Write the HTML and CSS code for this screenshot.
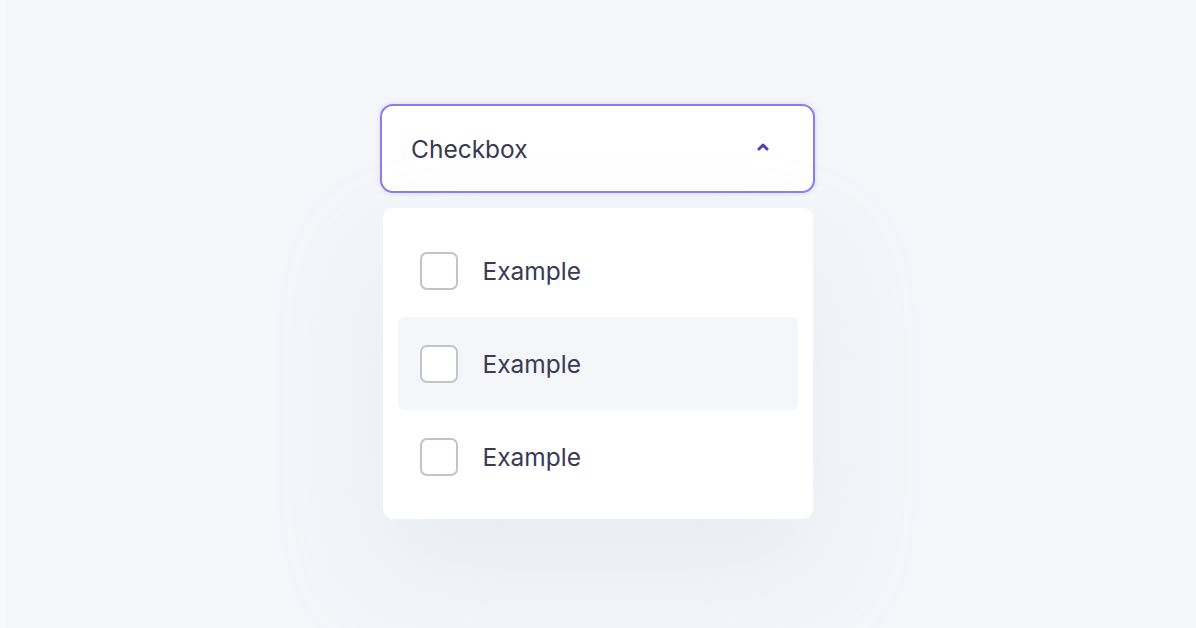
FILE: index.html
```html
<!DOCTYPE html>
<html>
<head>
<meta charset="utf-8">
<link rel="stylesheet" href="styles.css">
</head>
<body>
<div class="page">
  <div class="select">
    <div class="field">
      <span class="label">Checkbox</span>
      <svg class="chev" width="14" height="10" viewBox="0 0 14 10"><path d="M3 7 L7 3.2 L11 7" fill="none" stroke="#4a3fbf" stroke-width="3" stroke-linecap="round" stroke-linejoin="round"/></svg>
    </div>
    <div class="menu">
      <div class="row"><span class="box"></span><span class="text">Example</span></div>
      <div class="row hover"><span class="box"></span><span class="text">Example</span></div>
      <div class="row"><span class="box"></span><span class="text">Example</span></div>
    </div>
  </div>
</div>
</body>
</html>
```
FILE: styles.css
```css
html, body {
  margin: 0;
  padding: 0;
  height: 100%;
}
body {
  background: #f5f6fa;
  font-family: Inter, "Noto Sans", sans-serif;
  overflow: hidden;
}
.page {
  height: 628px;
  display: flex;
  justify-content: center;
  align-items: flex-start;
  padding-top: 104px;
  padding-right: 1px;
  box-sizing: border-box;
  box-shadow: inset 5px 0 0 #f9f9fc;
}
.select {
  width: 435px;
  display: flex;
  flex-direction: column;
  align-items: center;
}
.field {
  width: 100%;
  height: 89px;
  box-sizing: border-box;
  border: 2px solid #8a7eee;
  border-radius: 13px;
  background: #fff;
  display: flex;
  align-items: center;
  justify-content: space-between;
  padding: 0 43px 0 29px;
  box-shadow: 0 0 5px rgba(140, 128, 239, 0.3);
}
.label {
  font-size: 24.5px;
  color: #3a3950;
}
.chev {
  margin-top: -3px;
}
.menu {
  margin-top: 15px;
  width: 430px;
  background: #fff;
  border-radius: 11px;
  padding: 16px 15px 16px;
  box-sizing: border-box;
  box-shadow: 0 50px 100px rgba(205, 210, 232, 0.3);
}
.row {
  height: 93px;
  display: flex;
  align-items: center;
  padding-left: 22px;
  border-radius: 6px;
}
.row.hover {
  background: #f5f6fa;
}
.box {
  width: 38px;
  height: 38px;
  box-sizing: border-box;
  border: 2px solid #c3c3cb;
  border-radius: 7px;
  background: #fff;
  margin-right: 25px;
}
.text {
  font-size: 24.5px;
  color: #3c3a55;
}
```
